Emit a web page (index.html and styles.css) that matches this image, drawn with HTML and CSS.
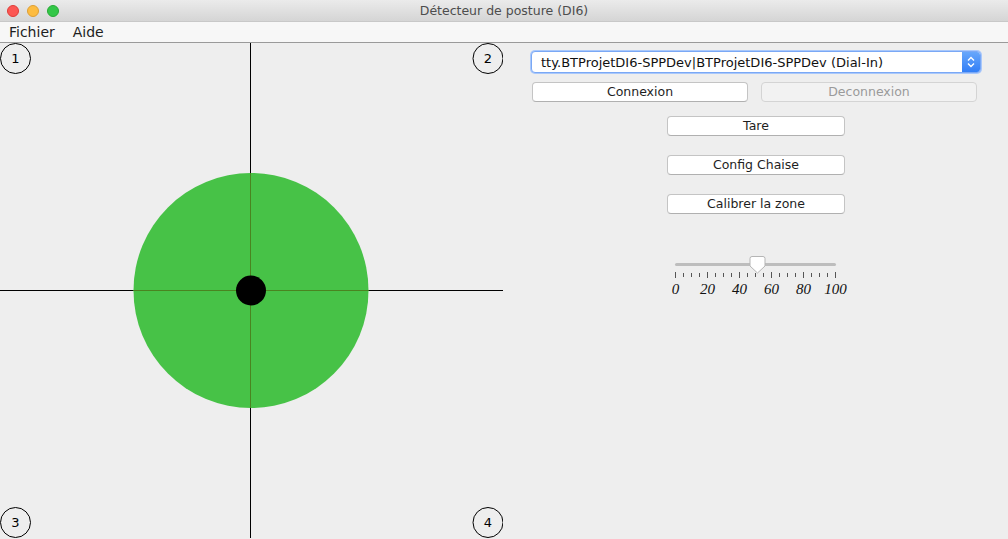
FILE: index.html
```html
<!DOCTYPE html>
<html lang="fr">
<head>
<meta charset="utf-8">
<title>Détecteur de posture (DI6)</title>
<link rel="stylesheet" href="styles.css">
</head>
<body>
<div class="window">
  <div class="titlebar">
    <div class="lights">
      <span class="light red"></span>
      <span class="light yellow"></span>
      <span class="light green"></span>
    </div>
    <div class="title">Détecteur de posture (DI6)</div>
  </div>
  <div class="menubar">
    <span class="menu">Fichier</span>
    <span class="menu">Aide</span>
  </div>
  <div class="main">
    <div class="canvas">
      <svg width="503" height="495" viewBox="0 0 503 495">
        <defs>
          <clipPath id="disc"><circle cx="251" cy="247.5" r="117.5"/></clipPath>
        </defs>
        <line x1="0" y1="247.5" x2="503" y2="247.5" stroke="#000" stroke-width="1"/>
        <line x1="250.5" y1="0" x2="250.5" y2="495" stroke="#000" stroke-width="1"/>
        <circle cx="251" cy="247.5" r="117.5" fill="#47c247"/>
        <g clip-path="url(#disc)">
          <line x1="0" y1="247.5" x2="503" y2="247.5" stroke="#4a8420" stroke-width="1"/>
          <line x1="250.5" y1="0" x2="250.5" y2="495" stroke="#4a8420" stroke-width="1"/>
        </g>
        <circle cx="251" cy="247.5" r="15" fill="#000"/>
        <g class="corner">
          <circle cx="15.5" cy="15.5" r="15" fill="none" stroke="#000"/>
          <text x="15.5" y="20">1</text>
          <circle cx="488" cy="15.5" r="15" fill="none" stroke="#000"/>
          <text x="488" y="20">2</text>
          <circle cx="15.5" cy="479.5" r="15" fill="none" stroke="#000"/>
          <text x="15.5" y="484">3</text>
          <circle cx="488" cy="479.5" r="15" fill="none" stroke="#000"/>
          <text x="488" y="484">4</text>
        </g>
      </svg>
    </div>
    <div class="panel">
      <div class="combo">
        <span class="combo-text">tty.BTProjetDI6-SPPDev|BTProjetDI6-SPPDev (Dial-In)</span>
        <span class="combo-arrow">
          <svg width="10" height="14" viewBox="0 0 10 14">
            <path d="M2 5.5 L5 2.5 L8 5.5 M2 8.5 L5 11.5 L8 8.5" fill="none" stroke="#fff" stroke-width="1.4"/>
          </svg>
        </span>
      </div>
      <div class="conn-row">
        <button class="btn wide">Connexion</button>
        <button class="btn wide disabled">Deconnexion</button>
      </div>
      <div class="actions">
        <button class="btn mid">Tare</button>
        <button class="btn mid">Config Chaise</button>
        <button class="btn mid">Calibrer la zone</button>
      </div>
      <div class="slider">
        <svg width="190" height="50" viewBox="0 0 190 50">
          <rect x="8" y="11" width="161" height="3" rx="1.5" fill="#bdbdbd"/>
          <g stroke="#555" stroke-width="1">
            <line x1="8.5" y1="20" x2="8.5" y2="26"/>
            <line x1="16.5" y1="21" x2="16.5" y2="25"/>
            <line x1="24.5" y1="21" x2="24.5" y2="25"/>
            <line x1="32.5" y1="21" x2="32.5" y2="25"/>
            <line x1="40.5" y1="20" x2="40.5" y2="26"/>
            <line x1="48.5" y1="21" x2="48.5" y2="25"/>
            <line x1="56.5" y1="21" x2="56.5" y2="25"/>
            <line x1="64.5" y1="21" x2="64.5" y2="25"/>
            <line x1="72.5" y1="20" x2="72.5" y2="26"/>
            <line x1="80.5" y1="21" x2="80.5" y2="25"/>
            <line x1="88.5" y1="21" x2="88.5" y2="25"/>
            <line x1="96.5" y1="21" x2="96.5" y2="25"/>
            <line x1="104.5" y1="20" x2="104.5" y2="26"/>
            <line x1="112.5" y1="21" x2="112.5" y2="25"/>
            <line x1="120.5" y1="21" x2="120.5" y2="25"/>
            <line x1="128.5" y1="21" x2="128.5" y2="25"/>
            <line x1="136.5" y1="20" x2="136.5" y2="26"/>
            <line x1="144.5" y1="21" x2="144.5" y2="25"/>
            <line x1="152.5" y1="21" x2="152.5" y2="25"/>
            <line x1="160.5" y1="21" x2="160.5" y2="25"/>
            <line x1="168.5" y1="20" x2="168.5" y2="26"/>
          </g>
          <path d="M83 6.5 Q83 4.5 85 4.5 L96 4.5 Q98 4.5 98 6.5 L98 14 L90.5 21 L83 14 Z" fill="#fff" stroke="#b5b5b5" stroke-width="1"/>
          <g class="ticklabels">
            <text x="8.5" y="42">0</text>
            <text x="40.5" y="42">20</text>
            <text x="72.5" y="42">40</text>
            <text x="104.5" y="42">60</text>
            <text x="136.5" y="42">80</text>
            <text x="168.5" y="42">100</text>
          </g>
        </svg>
      </div>
    </div>
  </div>
</div>
</body>
</html>
```

FILE: styles.css
```css
html, body {
  margin: 0;
  padding: 0;
  background: #eeeeee;
}
body {
  font-family: "DejaVu Sans", "Liberation Sans", sans-serif;
  font-size: 12.5px;
  color: #1e1e1e;
  width: 1008px;
  height: 539px;
  overflow: hidden;
}
.window {
  display: flex;
  flex-direction: column;
  height: 539px;
}
.titlebar {
  height: 22px;
  box-sizing: border-box;
  background: linear-gradient(#ebebeb, #d5d5d5);
  border-bottom: 1px solid #c8c8c8;
  display: flex;
  align-items: center;
  position: relative;
}
.lights {
  display: flex;
  gap: 8px;
  padding-left: 7px;
}
.light {
  width: 12px;
  height: 12px;
  border-radius: 50%;
  box-sizing: border-box;
}
.light.red { background: #fc5753; border: 1px solid #df3d38; }
.light.yellow { background: #fdbc40; border: 1px solid #de9f34; }
.light.green { background: #33c748; border: 1px solid #27aa35; }
.title {
  position: absolute;
  left: 0;
  right: 0;
  text-align: center;
  color: #4d4d4d;
  font-size: 12.5px;
}
.menubar {
  height: 21px;
  box-sizing: border-box;
  background: #f7f7f7;
  border-bottom: 1px solid #9a9a9a;
  display: flex;
  align-items: center;
  gap: 18px;
  padding-left: 9px;
  font-size: 14px;
}
.main {
  flex: 1;
  display: flex;
}
.canvas {
  width: 503px;
  height: 495px;
}
.canvas svg { display: block; }
.corner text {
  font-family: "DejaVu Sans", sans-serif;
  font-size: 13px;
  text-anchor: middle;
  fill: #000;
}
.panel {
  flex: 1;
  display: flex;
  flex-direction: column;
  padding: 8px 0 0 28px;
}
.combo {
  width: 450px;
  height: 22px;
  box-sizing: border-box;
  background: #fff;
  border: 1px solid #7aa8f5;
  box-shadow: 0 0 0 1px #a9c8fb;
  border-radius: 4px;
  display: flex;
  align-items: center;
  justify-content: space-between;
  overflow: hidden;
}
.combo-text {
  padding-left: 9px;
  white-space: nowrap;
  font-size: 13px;
  color: #111;
}
.combo-arrow {
  width: 18px;
  height: 22px;
  background: linear-gradient(#6aa9fb, #2f7cf6);
  display: flex;
  align-items: center;
  justify-content: center;
  border-radius: 0 4px 4px 0;
}
.conn-row {
  display: flex;
  gap: 13px;
  margin-top: 9px;
  padding-left: 1px;
}
.btn {
  font-family: "DejaVu Sans", "Liberation Sans", sans-serif;
  font-size: 12.5px;
  color: #1e1e1e;
  background: #fff;
  border: 1px solid #c4c4c4;
  border-bottom-color: #b0b0b0;
  border-radius: 4px;
  padding: 0;
  height: 20px;
  line-height: 18px;
}
.btn.wide { width: 216px; }
.btn.disabled {
  background: #f2f2f2;
  color: #9a9a9a;
  border-color: #d4d4d4;
}
.actions {
  display: flex;
  flex-direction: column;
  gap: 19px;
  margin-top: 14px;
  padding-left: 136px;
}
.btn.mid { width: 178px; }
.slider {
  margin-top: 38px;
  padding-left: 136px;
}
.slider svg { display: block; }
.ticklabels text {
  font-family: "Liberation Serif", serif;
  font-style: italic;
  font-size: 15px;
  text-anchor: middle;
  fill: #111;
}
```
